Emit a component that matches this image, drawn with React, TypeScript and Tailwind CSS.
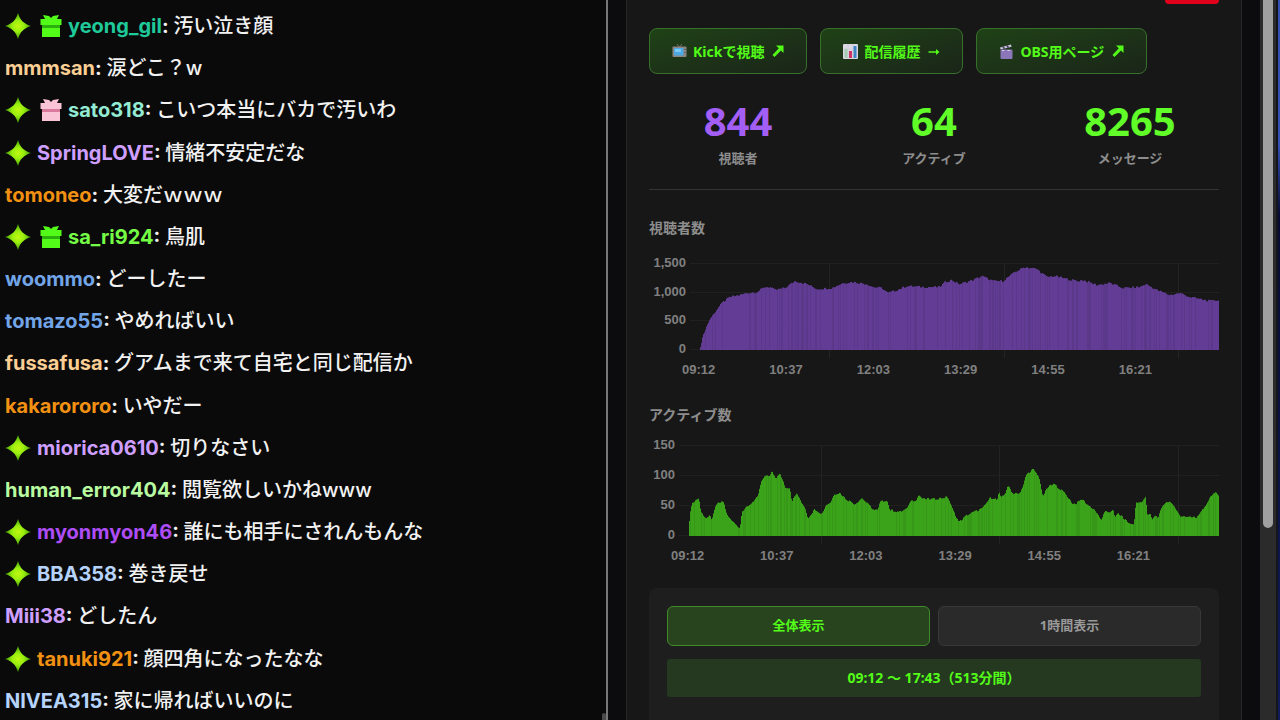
import React from "react";

type Message = {
  name: string;
  color: string;
  text: string;
  star?: boolean;
  gift?: "green" | "pink";
};

type Point = [number, number];

const messages: Message[] = [
  { name: "yeong_gil", color: "text-[#1fc99a]", text: "汚い泣き顔", star: true, gift: "green" },
  { name: "mmmsan", color: "text-[#fbcf94]", text: "涙どこ？w" },
  { name: "sato318", color: "text-[#93ebd3]", text: "こいつ本当にバカで汚いわ", star: true, gift: "pink" },
  { name: "SpringLOVE", color: "text-[#cf9fff]", text: "情緒不安定だな", star: true },
  { name: "tomoneo", color: "text-[#f29111]", text: "大変だｗｗｗ" },
  { name: "sa_ri924", color: "text-[#75fd46]", text: "鳥肌", star: true, gift: "green" },
  { name: "woommo", color: "text-[#72a5e8]", text: "どーしたー" },
  { name: "tomazo55", color: "text-[#72a5e8]", text: "やめればいい" },
  { name: "fussafusa", color: "text-[#fbcf94]", text: "グアムまで来て自宅と同じ配信か" },
  { name: "kakarororo", color: "text-[#f29111]", text: "いやだー" },
  { name: "miorica0610", color: "text-[#cf9fff]", text: "切りなさい", star: true },
  { name: "human_error404", color: "text-[#b9fba0]", text: "閲覧欲しいかねwww" },
  { name: "myonmyon46", color: "text-[#ae4df5]", text: "誰にも相手にされんもんな", star: true },
  { name: "BBA358", color: "text-[#b6d3fb]", text: "巻き戻せ", star: true },
  { name: "Miii38", color: "text-[#cf9fff]", text: "どしたん" },
  { name: "tanuki921", color: "text-[#f29111]", text: "顔四角になったなな", star: true },
  { name: "NIVEA315", color: "text-[#b6d3fb]", text: "家に帰ればいいのに" },
];

const times = ["09:12", "10:37", "12:03", "13:29", "14:55", "16:21"];

const viewerPoints: Point[] = [
  [0, 1], [2, 9], [5, 19], [10, 30], [18, 41], [23, 47], [30, 52], [40, 54], [47, 56], [57, 57], [65, 62],
  [70, 62], [75, 59], [85, 61], [95, 68], [107, 65], [117, 60], [132, 61], [143, 66], [153, 67], [167, 65],
  [173, 62], [182, 61], [188, 56], [197, 59], [207, 63], [223, 62], [240, 62], [245, 67], [252, 69], [257, 66],
  [260, 65], [273, 69], [282, 73], [293, 68], [303, 68], [315, 77], [325, 82], [337, 80], [347, 72], [355, 73],
  [367, 70], [378, 68], [383, 69], [397, 64], [410, 66], [423, 61], [440, 62], [446, 65], [457, 59], [470, 54],
  [480, 56], [490, 52], [510, 48], [519, 49],
];

const activePoints: Point[] = [
  [0, 7], [1, 23], [4, 33], [10, 37], [12, 23], [17, 17], [21, 19], [23, 14], [25, 25], [29, 32], [35, 33],
  [37, 23], [41, 16], [51, 7], [53, 23], [57, 29], [61, 29], [69, 40], [72, 52], [77, 60], [80, 58], [83, 63],
  [87, 57], [91, 61], [94, 55], [96, 48], [101, 47], [103, 34], [108, 42], [112, 33], [116, 28], [119, 17],
  [126, 26], [133, 21], [137, 30], [142, 33], [145, 41], [151, 42], [157, 36], [166, 31], [173, 37], [181, 29],
  [185, 25], [189, 25], [191, 33], [198, 35], [201, 25], [211, 23], [219, 27], [221, 34], [227, 35], [230, 40],
  [234, 36], [246, 36], [259, 38], [264, 25], [270, 13], [278, 20], [294, 27], [301, 37], [306, 37], [308, 34],
  [310, 43], [312, 37], [316, 41], [319, 50], [323, 42], [331, 42], [334, 48], [337, 60], [344, 66], [350, 58],
  [354, 39], [359, 48], [365, 51], [376, 42], [384, 31], [388, 32], [393, 36], [399, 30], [406, 25], [412, 15],
  [416, 23], [421, 23], [424, 26], [426, 17], [429, 22], [441, 11], [445, 11], [447, 32], [452, 33], [457, 38],
  [458, 21], [462, 20], [463, 15], [467, 20], [469, 17], [473, 29], [478, 33], [481, 33], [486, 28], [492, 18],
  [498, 18], [509, 18], [518, 32], [523, 41], [527, 42], [530, 38],
];

const heightAt = (points: Point[], x: number) => {
  const next = points.findIndex((p) => p[0] >= x);
  if (next <= 0) return points[0][1];
  const [x0, y0] = points[next - 1];
  const [x1, y1] = points[next];
  return y0 + ((y1 - y0) * (x - x0)) / (x1 - x0);
};

const noise = (n: number) => {
  const v = Math.sin(n * 12.9898) * 43758.5453;
  return v - Math.floor(v);
};

const Star = () => (
  <svg viewBox="0 0 26 26" className="h-[26px] w-[26px] shrink-0" aria-hidden="true">
    <defs>
      <radialGradient id="star-fill">
        <stop offset="0" stopColor="#c0f812" />
        <stop offset="0.45" stopColor="#98ee0e" />
        <stop offset="1" stopColor="#3f9c08" />
      </radialGradient>
    </defs>
    <path d="M13 0C15 7 19 11 26 13C19 15 15 19 13 26C11 19 7 15 0 13C7 11 11 7 13 0Z" fill="url(#star-fill)" />
  </svg>
);

const Gift = ({ kind }: { kind: "green" | "pink" }) => {
  const main = kind === "green" ? "#53fc18" : "#fbc3d6";
  const band = kind === "green" ? "#2cb010" : "#d9799b";
  return (
    <svg viewBox="0 0 22 22" className="h-[22px] w-[22px] shrink-0" aria-hidden="true">
      <path d="M3 0L9 1L11 3L13 1L19 0L17 4H21.5V10H0.5V4H5Z" fill={main} />
      <path d="M2 10H20V13H2Z" fill={band} />
      <path d="M2 13H20V22H2Z" fill={main} />
    </svg>
  );
};

const ChatRow = ({ name, color, text, star, gift }: Message) => (
  <li className="flex flex-1 items-center whitespace-nowrap text-[20px] leading-7">
    {star && (
      <span className="mr-[6px] flex items-center gap-[9px]">
        <Star />
        {gift && <Gift kind={gift} />}
      </span>
    )}
    <p className="font-medium text-[#f2f2f2]">
      <span className={`font-bold ${color}`}>{name}</span>
      <span className="font-bold">: </span>
      {text}
    </p>
  </li>
);

const TvIcon = () => (
  <svg viewBox="0 0 15 15" className="h-[15px] w-[15px]" aria-hidden="true">
    <path d="M5 0L7.5 3L10 0" stroke="#77706d" fill="none" />
    <rect x="0.5" y="2.5" width="14" height="10.5" rx="1" fill="#8d8583" />
    <rect x="2" y="4" width="9.5" height="7.5" rx="1" fill="#4ba9e4" />
    <rect x="3" y="5" width="6" height="3" rx="1" fill="#7ccbf5" />
    <path d="M13 5V6M13 8V9" stroke="#433c3c" />
  </svg>
);

const ChartIcon = () => (
  <svg viewBox="0 0 15 15" className="h-[15px] w-[15px]" aria-hidden="true">
    <rect width="15" height="15" rx="1" fill="#dcd7e4" />
    <path d="M0 5H15M0 10H15M5 0V15M10 0V15" stroke="#c6c0d2" strokeWidth="0.5" />
    <rect x="1.5" y="5" width="3" height="9" fill="#a3cdb0" />
    <rect x="6" y="7" width="3" height="7" fill="#cf3562" />
    <rect x="10.5" y="2" width="3" height="12" fill="#3f86c6" />
  </svg>
);

const ClapperIcon = () => (
  <svg viewBox="0 0 15 15" className="h-[15px] w-[15px]" aria-hidden="true">
    <path d="M1 3.5L12 0.5L12.6 2.8L1.6 5.6Z" fill="#c9c3dc" />
    <path d="M4 2.6L5.4 4.8M8 1.5L9.4 3.7" stroke="#4a4062" strokeWidth="1.6" />
    <rect x="1.5" y="5.5" width="12" height="9.5" rx="1" fill="#8a76b8" />
    <path d="M3 6.5H12" stroke="#d9d5e6" strokeWidth="1.2" strokeDasharray="2.4 3" />
  </svg>
);

const NorthEast = () => (
  <svg viewBox="0 0 12 12" className="h-3 w-3" fill="currentColor" aria-hidden="true">
    <path d="M4 0.5H11.5V8L9 5.5L2.5 12L0.5 10L6.8 3.3Z" />
  </svg>
);

const East = () => (
  <svg viewBox="0 0 12 12" className="h-3 w-3" fill="currentColor" aria-hidden="true">
    <path d="M0.5 6.3H8V4L11.5 7L8 10V7.7H0.5Z" />
  </svg>
);

const LinkButton = ({ icon, label, arrow }: { icon: React.ReactNode; label: string; arrow: React.ReactNode }) => (
  <a
    href="#"
    className="flex h-[46px] items-center whitespace-nowrap rounded-lg border border-[#37702a] bg-linear-to-br from-[#1f4216] to-[#1a2518] px-[22px] text-[14px] font-bold text-[#53fc18]"
  >
    {icon}
    <span className="ml-[6px] mr-2">{label}</span>
    {arrow}
  </a>
);

const Stat = ({ value, label, color }: { value: string; label: string; color: string }) => (
  <div className="text-center">
    <p className={`text-[40px] font-bold leading-[48px] ${color}`}>{value}</p>
    <p className="mt-[3px] text-[13px] font-bold leading-5 text-[#8d8d8d]">{label}</p>
  </div>
);

type BarChartProps = {
  points: Point[];
  labels: string[];
  labelsClass: string;
  svgClass: string;
  timesClass: string;
  plot: number;
  grid: number[];
  fill: string;
};

const BarChart = ({ points, labels, labelsClass, svgClass, timesClass, plot, grid, fill }: BarChartProps) => {
  const width = points[points.length - 1][0];
  const total = width + 10;
  const step = plot / (labels.length - 1);
  return (
    <div className="font-['Liberation_Sans',Arial,sans-serif] text-[13px] font-bold leading-[14px] text-[#808080]">
      <div className="flex items-start">
        <div className={`-mt-[7px] mr-1 flex shrink-0 flex-col justify-between text-right ${labelsClass}`}>
          {labels.map((l) => (
            <span key={l}>{l}</span>
          ))}
        </div>
        <svg
          viewBox={`0 0 ${total} ${plot + 9}`}
          preserveAspectRatio="none"
          className={`min-w-0 flex-1 ${svgClass}`}
          aria-hidden="true"
        >
          {labels.map((l, i) => (
            <rect key={l} x="0" y={Math.round(i * step)} width={total} height="1" fill="#202020" />
          ))}
          {grid.map((x) => (
            <rect key={x} x={x} y="0" width="1" height={plot + 9} fill="#232323" />
          ))}
          {Array.from({ length: width }, (_, i) => {
            const h = Math.max(1, heightAt(points, i + 0.5) + (noise(Math.floor(i / 2)) - 0.5) * 2);
            return (
              <rect
                key={i}
                x={10 + i}
                y={plot - h}
                width="1"
                height={h + 1}
                fill={fill}
                fillOpacity={noise(i + 40) > 0.75 ? 0.92 : 1}
              />
            );
          })}
        </svg>
      </div>
      <div className={`mt-[5px] grid grid-cols-6 text-center ${timesClass}`}>
        {times.map((t) => (
          <span key={t}>{t}</span>
        ))}
      </div>
    </div>
  );
};

const App = () => {
  return (
    <div className="flex h-screen overflow-hidden bg-[#0a0a0a] font-['Noto_Sans','Noto_Sans_CJK_JP',sans-serif]">
      <section className="flex w-[606px] shrink-0 justify-between">
        <ul className="-mb-[2px] flex flex-col pl-[5px] pt-[5px] font-['Inter','Noto_Sans_CJK_JP',sans-serif]">
          {messages.map((m) => (
            <ChatRow key={m.name} {...m} />
          ))}
        </ul>
        <div className="h-[7px] w-1 self-end rounded-t-sm bg-[#4a4a4a]" />
      </section>
      <div className="w-[2px] shrink-0 bg-[#777777]" />

      <main className="min-w-0 flex-1 bg-[#0c0c0f] px-[18px]">
        <div className="h-full overflow-hidden border-x border-[#262626] bg-[#171717] px-[22px]">
          <div className="flex justify-end">
            <div className="h-1 w-[54px] rounded-b bg-[#e0001b]" />
          </div>

          <nav className="mt-6 flex gap-[13px]">
            <LinkButton icon={<TvIcon />} label="Kickで視聴" arrow={<NorthEast />} />
            <LinkButton icon={<ChartIcon />} label="配信履歴" arrow={<East />} />
            <LinkButton icon={<ClapperIcon />} label="OBS用ページ" arrow={<NorthEast />} />
          </nav>

          <div className="mt-[23px] grid grid-cols-3 gap-[18px] border-b border-[#333333] pb-[21px]">
            <Stat value="844" label="視聴者" color="text-[#a35ff5]" />
            <Stat value="64" label="アクティブ" color="text-[#60fd29]" />
            <Stat value="8265" label="メッセージ" color="text-[#60fd29]" />
          </div>

          <h2 className="mt-7 text-[14px] font-bold leading-5 text-[#8d8d8d]">視聴者数</h2>
          <div className="mt-[25px]">
            <BarChart
              points={viewerPoints}
              labels={["1,500", "1,000", "500", "0"]}
              labelsClass="h-[100px] w-[37px]"
              svgClass="h-[95px]"
              timesClass="ml-[6px] mr-[40px]"
              plot={86}
              grid={[139, 314, 488]}
              fill="#633c96"
            />
          </div>

          <h2 className="mt-7 text-[14px] font-bold leading-5 text-[#8d8d8d]">アクティブ数</h2>
          <div className="mt-5">
            <BarChart
              points={activePoints}
              labels={["150", "100", "50", "0"]}
              labelsClass="h-[104px] w-[26px]"
              svgClass="h-[99px]"
              timesClass="-ml-[6px] mr-[41px]"
              plot={90}
              grid={[142, 320, 499]}
              fill="#3ba31a"
            />
          </div>

          <div className="mt-[25px] rounded-lg bg-[#1e1e1e] px-[18px] pb-10 pt-[18px] text-[13px] font-bold">
            <div className="grid grid-cols-2 gap-2">
              <button type="button" className="h-10 rounded-md border border-[#3f8a2a] bg-[#28441e] text-[#53fc18]">
                全体表示
              </button>
              <button type="button" className="h-10 rounded-md border border-[#383838] bg-[#2a2a2a] text-[#999999]">
                1時間表示
              </button>
            </div>
            <p className="mt-[13px] rounded-[3px] bg-[#253820] py-[9px] text-center text-[14px] leading-5 text-[#53fc18]">
              09:12 〜 17:43（513分間）
            </p>
          </div>
        </div>
      </main>

      <div className="flex w-4 shrink-0 items-start justify-center bg-[#2b2b2b]">
        <div className="h-[528px] w-[10px] rounded-b-full bg-[#a0a0a0]" />
      </div>
      <div className="w-[2px] shrink-0 bg-[#14161c]" />
      <div className="w-[2px] shrink-0 bg-linear-to-b from-[#3451b5] from-20% via-[#070b33] via-30% to-[#101c5c]" />
    </div>
  );
};

export default App;
